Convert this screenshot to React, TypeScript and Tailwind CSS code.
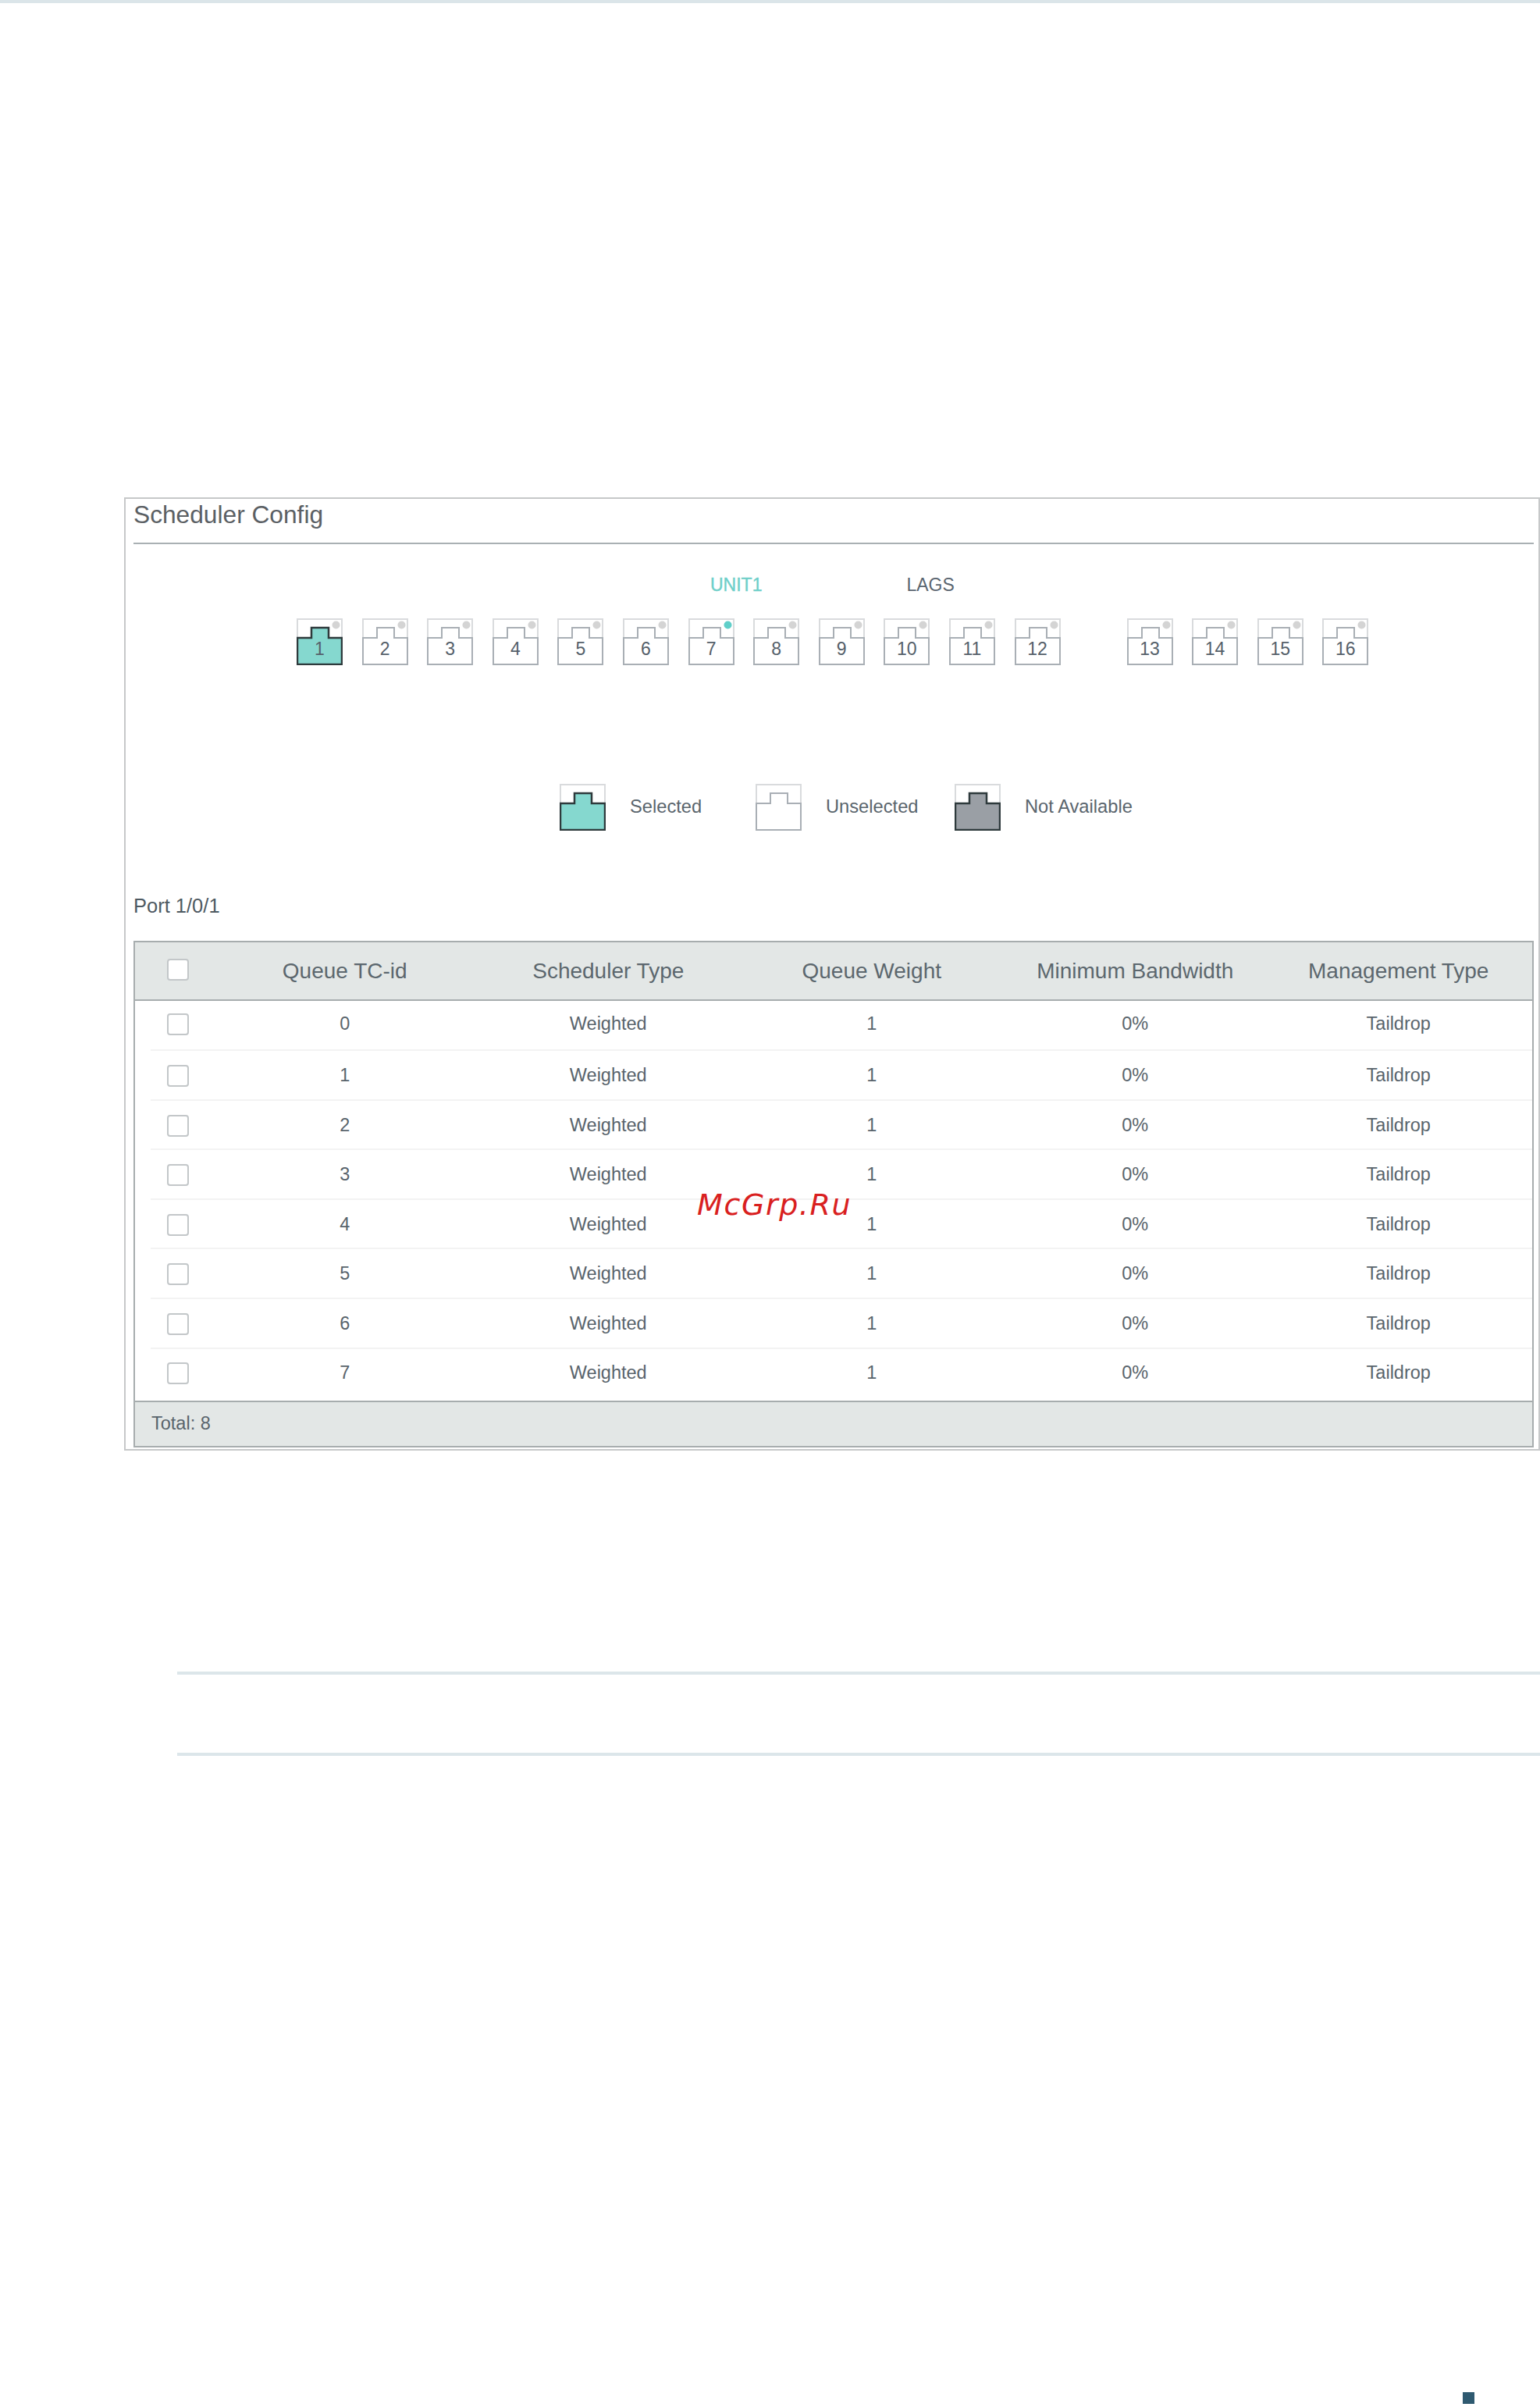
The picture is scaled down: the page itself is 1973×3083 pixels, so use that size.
const headers = ["Queue TC-id", "Scheduler Type", "Queue Weight", "Minimum Bandwidth", "Management Type"];

// row heights in the reference are not quite even, the first and last sit a little high
const rows = [
  { id: 0, size: "h-[64px] pb-[5px]" },
  { id: 1, size: "h-[64px]" },
  { id: 2, size: "h-[63px]" },
  { id: 3, size: "h-[64px]" },
  { id: 4, size: "h-[63px]" },
  { id: 5, size: "h-[64px]" },
  { id: 6, size: "h-[64px]" },
  { id: 7, size: "h-[66px] pb-[4px]" },
];

type PortVariant = "selected" | "unselected" | "unavailable";

function PortIcon({ variant = "unselected", label, dot }: { variant?: PortVariant; label?: string; dot?: "idle" | "active" }) {
  const fill = variant === "selected" ? "#85d8cf" : variant === "unavailable" ? "#9a9fa5" : "#ffffff";
  const stroke = variant === "unselected" ? "#a9afb5" : "#2e3a3c";
  const strokeWidth = variant === "unselected" ? 2 : 2.5;

  return (
    <div className="relative h-[60px] w-[59px] shrink-0">
      <svg width="59" height="60" viewBox="0 0 59 60" className="block">
        <path d="M1 24V1H58V24" fill="none" stroke="#d9dbdd" strokeWidth="2" />
        <path d="M1 25H19V12H41V25H58V59H1Z" fill={fill} stroke={stroke} strokeWidth={strokeWidth} />
        {dot && <circle cx="50.5" cy="8.5" r="5" fill={dot === "active" ? "#5fcfc9" : "#d4d4d4"} />}
      </svg>
      {label && (
        <span className="absolute inset-x-0 top-[25px] flex h-[29px] items-center justify-center text-[23px] leading-none text-[#55606a]">
          {label}
        </span>
      )}
    </div>
  );
}

function Checkbox() {
  return <span className="block h-[28px] w-[28px] rounded-[4px] border-2 border-[#c3c7c9] bg-white" />;
}

function PortRow() {
  const first = Array.from({ length: 12 }, (_, i) => i + 1);
  const second = [13, 14, 15, 16];
  return (
    <div className="mt-[29px] flex pl-[209px]">
      <div className="flex gap-[24.6px]">
        {first.map((n) => (
          <PortIcon
            key={n}
            label={String(n)}
            variant={n === 1 ? "selected" : "unselected"}
            dot={n === 7 ? "active" : "idle"}
          />
        ))}
      </div>
      <div className="ml-[85px] flex gap-[24.6px]">
        {second.map((n) => (
          <PortIcon key={n} label={String(n)} dot="idle" />
        ))}
      </div>
    </div>
  );
}

function Legend() {
  return (
    <div className="mt-[152px] flex pl-[546px] text-[23.7px] text-[#5a656d]">
      <div className="flex w-[251px] items-center gap-[31px]">
        <PortIcon variant="selected" />
        <span>Selected</span>
      </div>
      <div className="flex w-[255px] items-center gap-[31px]">
        <PortIcon />
        <span>Unselected</span>
      </div>
      <div className="flex items-center gap-[31px]">
        <PortIcon variant="unavailable" />
        <span>Not Available</span>
      </div>
    </div>
  );
}

function QueueTable() {
  return (
    <div className="mt-[30px] w-[1794px] border-2 border-[#a7adae]">
      <div className="flex h-[75px] border-b-2 border-[#a7adae] bg-[#e3e7e6]">
        <div className="w-[100px] pl-[41px] pt-[21px]">
          <Checkbox />
        </div>
        {headers.map((h) => (
          <div key={h} className="flex w-[337.5px] items-center justify-center text-[28px] text-[#5c676e]">
            {h}
          </div>
        ))}
      </div>
      {rows.map(({ id, size }) => (
        <div key={id} className={`relative flex items-center text-[23.5px] text-[#59646c] ${size}`}>
          <div className="w-[100px] pl-[41px]">
            <Checkbox />
          </div>
          <div className="w-[337.5px] text-center">{id}</div>
          <div className="w-[337.5px] text-center">Weighted</div>
          <div className="w-[337.5px] text-center">1</div>
          <div className="w-[337.5px] text-center">0%</div>
          <div className="w-[337.5px] text-center">Taildrop</div>
          {id < 7 && <div className="absolute bottom-0 left-[20px] right-0 h-[2px] bg-[#f3f3f3]" />}
        </div>
      ))}
      <div className="flex h-[58px] items-center border-t-2 border-[#a7adae] bg-[#e3e7e6] pl-[21px] text-[23.5px] text-[#59646c]">
        Total: 8
      </div>
    </div>
  );
}

export default function App() {
  return (
    <div className="relative flex h-[3083px] w-[1973px] flex-col overflow-hidden bg-white font-['Liberation_Sans',Arial,sans-serif]">
      <div className="h-[4px] bg-[#dbe5e9]" />

      <section className="ml-[159px] mt-[633px] h-[1221px] w-[1814px] border-2 border-[#c6c8c9] px-[10px]">
        <div className="h-[58px] w-[1794px] border-b-2 border-[#a9b0b3] text-[31.7px] leading-[40px] text-[#5b6064]">
          Scheduler Config
        </div>

        <div className="mt-[38px] flex h-[28px] items-center gap-[185px] pl-[739px] text-[23px]">
          <span className="text-[#6ecfc9] [-webkit-text-stroke:0.4px_#6ecfc9]">UNIT1</span>
          <span className="text-[#5a6570]">LAGS</span>
        </div>

        <PortRow />
        <Legend />

        <div className="mt-[81px] h-[30px] text-[25.5px] leading-[30px] text-[#4e5a62]">Port 1/0/1</div>
        <QueueTable />
      </section>

      <div className="ml-[227px] mt-[283px] h-[4px] bg-[#dce6ea]" />
      <div className="ml-[227px] mt-[100px] h-[4px] bg-[#dce6ea]" />
      <div className="ml-[1874px] mt-[815px] h-[15px] w-[15px] bg-[#2f5a70]" />

      <span className="absolute left-[893px] top-[1518px] font-['DejaVu_Sans',sans-serif] text-[38px] italic leading-[50px] tracking-[1.6px] text-[#d92020]">
        McGrp.Ru
      </span>
    </div>
  );
}
